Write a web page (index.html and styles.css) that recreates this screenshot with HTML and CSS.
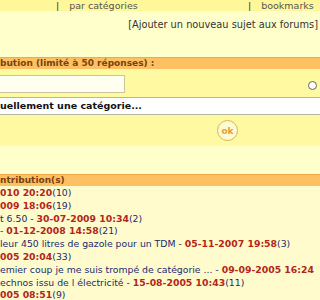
FILE: index.html
```html
<!DOCTYPE html>
<html lang="fr">

<head>
  <meta charset="UTF-8" />
  <title>Forums - recherche</title>
  <link rel="stylesheet" href="styles.css">
</head>

<body>
  <div class="topnav">
    <span class="nav-item"><span class="sep">|</span>par catégories</span>
    <span class="nav-item"><span class="sep">|</span>bookmarks</span>
  </div>

  <div class="actions">
    <a href="#">[Ajouter un nouveau sujet aux forums]</a>
  </div>

  <div class="section-head">bution (limité à 50 réponses) :</div>

  <form class="search">
    <div class="search-row">
      <input type="text" class="keyword" />
      <span class="radio"></span>
    </div>
    <div class="category">uellement une catégorie...</div>
    <div class="submit-row">
      <button type="button" class="ok-btn">ok</button>
    </div>
  </form>

  <div class="spacer"></div>

  <div class="section-head">ntribution(s)</div>

  <ul class="topics">
    <li><b>010 20:20</b>(10)</li>
    <li><b>009 18:06</b>(19)</li>
    <li>t 6.50 - <b>30-07-2009 10:34</b>(2)</li>
    <li>- <b>01-12-2008 14:58</b>(21)</li>
    <li> leur 450 litres de gazole pour un TDM - <b>05-11-2007 19:58</b>(3)</li>
    <li><b>005 20:04</b>(33)</li>
    <li>emier coup je me suis trompé de catégorie ... - <b>09-09-2005 16:24</b></li>
    <li>echnos issu de l électricité - <b>15-08-2005 10:43</b>(11)</li>
    <li><b>005 08:51</b>(9)</li>
  </ul>
</body>

</html>
```

FILE: styles.css
```css
* {
  margin: 0;
  padding: 0;
  box-sizing: border-box;
}

body {
  width: 320px;
  height: 300px;
  overflow: hidden;
  background: #ffffcc;
  font-family: 'DejaVu Sans', Verdana, sans-serif;
  font-size: 9px;
  color: #333;
}

.topnav {
  height: 11px;
  background: #fff79a;
  display: flex;
  line-height: 11px;
  color: #555;
  font-size: 9.5px;
}

.nav-item:first-child {
  margin-left: 56px;
  width: 192px;
}

.sep {
  color: #333;
  margin-right: 10px;
}

.actions {
  height: 46px;
  padding-top: 8px;
  text-align: right;
  padding-right: 2px;
}

.actions a {
  color: #333;
  text-decoration: none;
  font-size: 9.8px;
}

.section-head {
  height: 12px;
  background: #fdc062;
  border-top: 1px solid #f5a845;
  color: #7a4210;
  font-weight: bold;
  font-size: 9px;
  line-height: 11px;
}

.search {
  background: #fffaa2;
  height: 77px;
  padding-top: 6px;
}

.search-row {
  display: flex;
  align-items: center;
  justify-content: space-between;
  height: 18px;
}

.keyword {
  width: 127px;
  height: 18px;
  background: #fffff0;
  border: 1px solid #c8c8a0;
  margin-left: -2px;
}

.radio {
  width: 9px;
  height: 9px;
  border: 1.5px solid #666;
  border-radius: 50%;
  background: #fff;
  margin-right: 3px;
  margin-top: 2px;
}

.category {
  margin-top: 4px;
  height: 18px;
  background: #fff;
  border-top: 1px solid #b8b8a0;
  border-bottom: 1px solid #b8b8a0;
  font-weight: bold;
  color: #111;
  font-size: 9.5px;
  line-height: 16px;
}

.submit-row {
  display: flex;
  padding-left: 217px;
  padding-top: 5px;
}

.ok-btn {
  width: 21px;
  height: 21px;
  border-radius: 50%;
  border: 1.5px solid #d9b25a;
  background: #fffbd0;
  color: #e8a030;
  font-family: 'DejaVu Sans', sans-serif;
  font-weight: bold;
  font-size: 9px;
}

.spacer {
  height: 28px;
}

.topics {
  list-style: none;
  padding-top: 1px;
  background: #fffbcc;
}

.topics li {
  height: 12.8px;
  line-height: 12.8px;
  white-space: nowrap;
  color: #1c2a6e;
  font-size: 9.3px;
}

.topics b {
  color: #b3261a;
}
```
